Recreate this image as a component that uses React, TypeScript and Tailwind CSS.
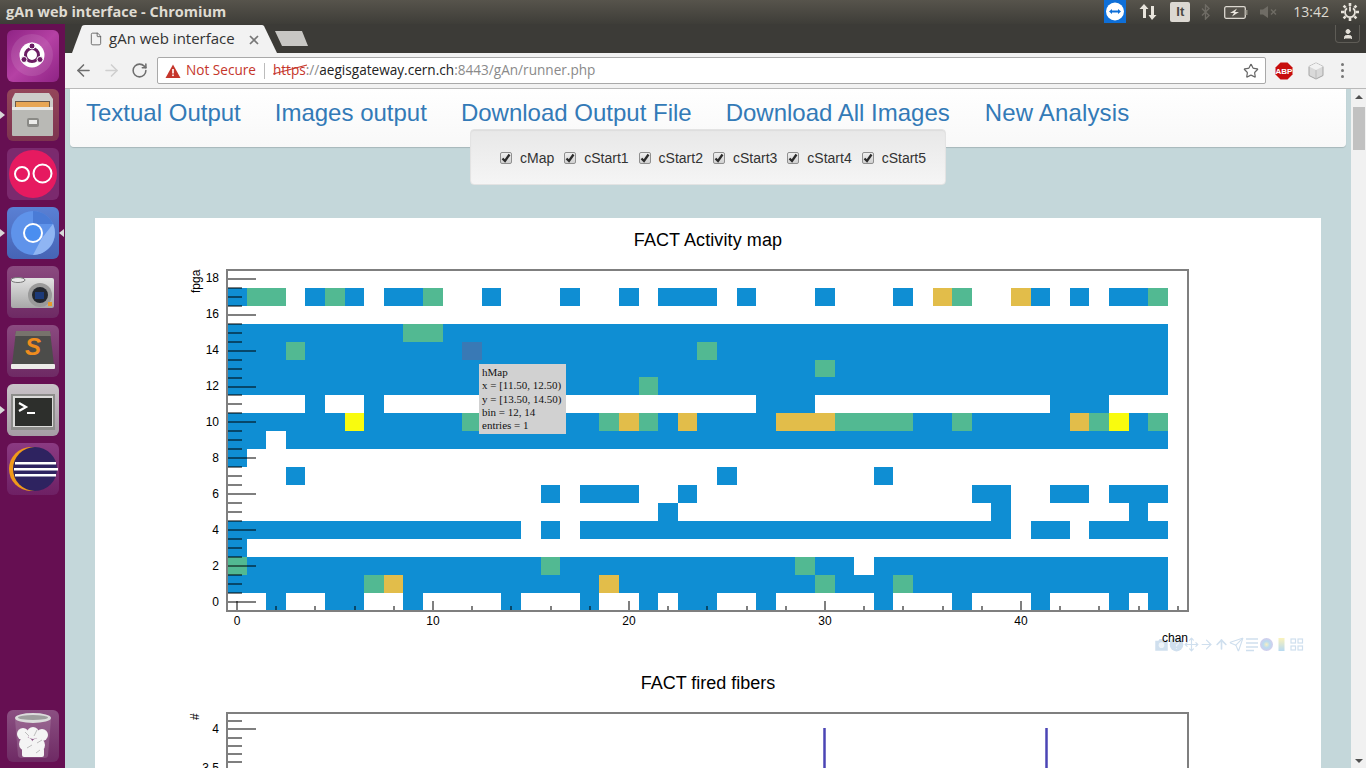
import { ArrowLeft, ArrowRight, ArrowUp, File, Move, RotateCw, Send, Star, User } from "lucide-react";

const UI_FONT = "font-['Open_Sans','Noto_Sans',sans-serif]";

const BLUE = "#0f8ed3";
const GREEN = "#52b992";
const ORANGE = "#e2bd4a";
const YELLOW = "#f9fb0e";
const HOVER = "#3979b5";

const colX = (col: number) => Math.round(227.05 + 19.6 * col);
const rowY = (row: number) => Math.round(593 - 17.96 * row);

type Run = [number, number, string?];

// [first col, last col, colour] per fpga row, later runs paint over earlier ones
const heatRows: Record<number, Run[]> = {
  17: [
    [0, 0], [1, 2, GREEN], [4, 4], [5, 5, GREEN], [6, 6], [8, 9], [10, 10, GREEN], [13, 13], [17, 17], [20, 20],
    [22, 24], [26, 26], [30, 30], [34, 34], [36, 36, ORANGE], [37, 37, GREEN], [40, 40, ORANGE], [41, 41], [43, 43],
    [45, 46], [47, 47, GREEN],
  ],
  15: [[0, 47], [9, 10, GREEN]],
  14: [[0, 47], [3, 3, GREEN], [12, 12, HOVER], [24, 24, GREEN]],
  13: [[0, 47], [30, 30, GREEN]],
  12: [[0, 47], [21, 21, GREEN]],
  11: [[4, 4], [7, 7], [27, 29], [42, 44]],
  10: [
    [0, 47], [6, 6, YELLOW], [12, 12, GREEN], [19, 19, GREEN], [20, 20, ORANGE], [21, 21, GREEN], [23, 23, ORANGE],
    [28, 30, ORANGE], [31, 34, GREEN], [37, 37, GREEN], [43, 43, ORANGE], [44, 44, GREEN], [45, 45, YELLOW],
    [47, 47, GREEN],
  ],
  9: [[0, 1], [3, 47]],
  8: [[0, 0]],
  7: [[3, 3], [25, 25], [33, 33]],
  6: [[16, 16], [18, 20], [23, 23], [38, 39], [42, 43], [45, 47]],
  5: [[22, 22], [39, 39], [46, 46]],
  4: [[0, 14], [16, 16], [18, 39], [41, 42], [44, 47]],
  3: [[0, 0]],
  2: [[0, 31], [33, 47], [0, 0, GREEN], [16, 16, GREEN], [29, 29, GREEN]],
  1: [[0, 47], [7, 7, GREEN], [8, 8, ORANGE], [19, 19, ORANGE], [30, 30, GREEN], [34, 34, GREEN]],
  0: [[2, 2], [5, 6], [9, 9], [14, 14], [18, 18], [21, 21], [23, 24], [27, 27], [33, 33], [37, 37], [41, 41], [45, 45], [47, 47]],
};

const range = (count: number) => Array.from({ length: count }, (_, index) => index);

const ActivityMap = () => (
  <svg viewBox="95 260 1226 400" width={1226} height={400} className="relative block">
    <g shapeRendering="crispEdges">
      {Object.entries(heatRows).map(([row, runs]) =>
        runs.map(([from, to, color], index) => (
          <rect
            key={`${row}-${index}`}
            x={colX(from)}
            y={rowY(Number(row))}
            width={colX(to + 1) - colX(from)}
            height={rowY(Number(row) - 1) - rowY(Number(row))}
            fill={color ?? BLUE}
          />
        )),
      )}
      {range(39).map((tick) => {
        const y = Math.round(611 - 8.98 * tick);
        const major = (tick - 1) % 4 === 0;
        return <rect key={tick} x={227} width={major ? 29 : 15} y={y - 1} height={2} fill="#000" fillOpacity={0.5} />;
      })}
      {range(25).map((tick) => {
        const x = Math.round(237 + 39.2 * tick);
        const top = tick % 5 === 0 ? 601 : 606;
        return <rect key={tick} x={x - 1} width={2} y={top} height={610 - top} fill="#000" fillOpacity={0.5} />;
      })}
      <rect x={227} y={270} width={961} height={341} fill="none" stroke="#7f7f7f" strokeWidth={2} />
    </g>
    <g fontFamily="'Liberation Sans', sans-serif" fontSize={12} fill="#000">
      {range(10).map((index) => (
        <text key={index} x={219} y={605.5 - 36 * index} textAnchor="end">
          {index * 2}
        </text>
      ))}
      {range(5).map((index) => (
        <text key={index} x={237 + 196 * index} y={625} textAnchor="middle">
          {index * 10}
        </text>
      ))}
      <text x={1188} y={642} textAnchor="end">chan</text>
      <text transform="translate(200 293) rotate(-90)">fpga</text>
    </g>
  </svg>
);

const FiberPlot = () => (
  <svg viewBox="95 700 1226 68" width={1226} height={68} className="block">
    <g shapeRendering="crispEdges">
      {range(8).map((tick) => {
        const y = Math.round(713 + 8.2 * tick);
        return <rect key={tick} x={227} width={tick === 2 ? 29 : 15} y={y - 1} height={2} fill="#000" fillOpacity={0.5} />;
      })}
      <rect x={227} y={713} width={961} height={100} fill="none" stroke="#7f7f7f" strokeWidth={2} />
    </g>
    <line x1={824.5} x2={824.5} y1={728} y2={768} stroke="#4b45b5" strokeWidth={2.5} />
    <line x1={1046.5} x2={1046.5} y1={728} y2={768} stroke="#4b45b5" strokeWidth={2.5} />
    <g fontFamily="'Liberation Sans', sans-serif" fontSize={12} fill="#000">
      <text x={219} y={733} textAnchor="end">4</text>
      <text x={219} y={772} textAnchor="end">3.5</text>
      <text transform="translate(199 720) rotate(-90)">#</text>
    </g>
  </svg>
);

const ModeBar = () => (
  <div className="absolute left-[1059px] top-[385px] flex items-center text-[#cfdfee]">
    <svg width="15" height="15" viewBox="0 0 24 24" fill="#cfdfee">
      <path d="M2 6h5l2-3h6l2 3h5v16H2z" />
      <circle cx="12" cy="13" r="4.5" fill="#eef4f9" />
    </svg>
    <svg width="15" height="15" viewBox="0 0 24 24">
      <circle cx="12" cy="12" r="11" fill="#cfdfee" />
      <path d="M9 9a3 3 0 1 1 4 3l-1 2v1M12 18v1" stroke="#eef4f9" strokeWidth="2" fill="none" />
    </svg>
    <Move size={15} strokeWidth={1.8} />
    <ArrowRight size={15} strokeWidth={1.8} />
    <ArrowUp size={15} strokeWidth={2.6} />
    <Send size={15} strokeWidth={1.8} />
    <svg width="15" height="15" viewBox="0 0 15 15" stroke="#cfdfee" strokeWidth="1.4">
      <path d="M2 2h12M2 6h12M2 10h12M2 13.500h8" />
    </svg>
    <svg width="15" height="15" viewBox="0 0 15 15">
      <defs>
        <radialGradient id="modeGlow">
          <stop offset="0" stopColor="#f7efc4" />
          <stop offset="0.5" stopColor="#bcdcf0" />
          <stop offset="1" stopColor="#d2cdec" />
        </radialGradient>
      </defs>
      <circle cx="7.5" cy="7.5" r="6.5" fill="url(#modeGlow)" />
    </svg>
    <svg width="15" height="15" viewBox="0 0 15 15">
      <defs>
        <linearGradient id="modeBar" x1="0" y1="0" x2="0" y2="1">
          <stop offset="0" stopColor="#fbf3bb" />
          <stop offset="1" stopColor="#b7daf2" />
        </linearGradient>
      </defs>
      <rect x="4.5" y="1" width="6" height="13" fill="url(#modeBar)" />
    </svg>
    <svg width="15" height="15" viewBox="0 0 15 15" fill="none" stroke="#cfdfee" strokeWidth="1.2">
      <rect x="2" y="2" width="4.5" height="4" />
      <rect x="9" y="2" width="4.5" height="4" />
      <rect x="2" y="9" width="4.5" height="4" />
      <rect x="9" y="9" width="4.5" height="4" />
    </svg>
  </div>
);

const Check = ({ label }: { label: string }) => (
  <label className="flex items-center gap-[8px] text-[14px] leading-[20px] text-[#333]">
    <span className="flex h-[12px] w-[12px] items-center justify-center rounded-[2px] border border-[#8f8f8f] bg-gradient-to-b from-[#f0f0f0] to-[#d0d0d0]">
      <svg width="10" height="10" viewBox="0 0 10 10">
        <path d="M1.500 5.500 4 8l4.500-6.500" fill="none" stroke="#2b2b2b" strokeWidth="2.300" />
      </svg>
    </span>
    {label}
  </label>
);

const Tile = ({ className, children }: { className: string; children: React.ReactNode }) => (
  <div className={`relative h-[52px] w-[52px] overflow-hidden rounded-[6px] ${className}`}>{children}</div>
);

const Launcher = () => (
  <aside className="flex w-[65px] flex-col items-center bg-[#660f52] pb-[6px] pt-[6px]">
    <div className="flex flex-col gap-[7px]">
      <Tile className="bg-gradient-to-br from-[#8f2385] via-[#b541a4] to-[#8f2385]">
        <svg viewBox="0 0 52 52" className="h-full w-full">
          <circle cx="25" cy="25" r="21" fill="#fff" opacity="0.1" />
          <circle cx="25" cy="25" r="12.5" fill="#fff" />
          <circle cx="25" cy="25" r="6.5" fill="none" stroke="#6b1d63" strokeWidth="3" />
          <circle cx="25" cy="16" r="3" fill="#6b1d63" stroke="#fff" />
          <circle cx="17" cy="29.5" r="3" fill="#6b1d63" stroke="#fff" />
          <circle cx="33" cy="29.5" r="3" fill="#6b1d63" stroke="#fff" />
        </svg>
      </Tile>
      <Tile className="bg-gradient-to-b from-[#94465a] to-[#7d3450]">
        <svg viewBox="0 0 52 52" className="h-full w-full">
          <path d="M8 4h34l4 6v8H5v-8z" fill="#cdcdca" />
          <rect x="8" y="12" width="35" height="8" fill="#6b5a4a" />
          <rect x="9" y="13" width="33" height="5" fill="#e8a654" />
          <path d="M5 20h41v26q0 1-1 1H6q-1 0-1-1z" fill="#b9b9b5" />
          <rect x="5" y="18" width="41" height="3" fill="#e8e8e6" />
          <rect x="20" y="29" width="12" height="9" rx="2" fill="#8a8a86" />
          <rect x="22" y="31" width="8" height="4" fill="#ececea" />
        </svg>
      </Tile>
      <Tile className="bg-[#7b2a6e]">
        <svg viewBox="0 0 52 52" className="h-full w-full">
          <circle cx="26" cy="26" r="24" fill="#e61a60" />
          <circle cx="15" cy="26" r="7" fill="none" stroke="#fff" strokeWidth="2" />
          <circle cx="35.5" cy="25.5" r="9" fill="none" stroke="#fff" strokeWidth="2" />
        </svg>
      </Tile>
      <Tile className="bg-gradient-to-b from-[#5a80d4] to-[#4664b5]">
        <svg viewBox="0 0 52 52" className="h-full w-full">
          <circle cx="26" cy="26" r="22" fill="#5f93ea" />
          <path d="M26 4a22 22 0 0 1 20 13H26z" fill="#4a7bd6" />
          <path d="M46 17a22 22 0 0 1-20 31l9-17z" fill="#8fb5f3" />
          <circle cx="26" cy="26" r="10" fill="#fff" />
          <circle cx="26" cy="26" r="8" fill="#4a8ef0" />
        </svg>
      </Tile>
      <Tile className="bg-gradient-to-b from-[#8b4a80] to-[#6e2a64]">
        <svg viewBox="0 0 52 52" className="h-full w-full">
          <defs>
            <linearGradient id="cameraBody" x1="0" y1="0" x2="0" y2="1">
              <stop offset="0" stopColor="#e2e2e2" />
              <stop offset="1" stopColor="#a8a8a8" />
            </linearGradient>
          </defs>
          <rect x="4" y="12" width="43" height="30" rx="2" fill="url(#cameraBody)" />
          <ellipse cx="11" cy="14" rx="7" ry="2.500" fill="#e8e8e8" stroke="#777" />
          <circle cx="33" cy="29" r="12" fill="#9a9a9a" />
          <circle cx="33" cy="29" r="8" fill="#23272e" />
          <rect x="28" y="26" width="9" height="7" fill="#1c3a78" />
          <rect x="41" y="36" width="4" height="4" fill="#e89b2c" />
        </svg>
      </Tile>
      <Tile className="bg-gradient-to-b from-[#8b4a80] to-[#6e2a64]">
        <svg viewBox="0 0 52 52" className="h-full w-full">
          <path d="M9 6h34l4 34H5z" fill="#4c4c4a" />
          <path d="M9 6h34l1 5H8z" fill="#77736c" />
          <rect x="4" y="39" width="44" height="5" rx="1" fill="#ecebe8" />
          <text x="26" y="30" textAnchor="middle" fontFamily="'Liberation Sans', sans-serif" fontWeight="700" fontStyle="italic" fontSize="24" fill="#f08c1e">
            S
          </text>
        </svg>
      </Tile>
      <Tile className="bg-gradient-to-b from-[#c9c3c8] to-[#a69ca5]">
        <svg viewBox="0 0 52 52" className="h-full w-full">
          <rect x="4" y="10" width="44" height="36" fill="#8d8d8b" />
          <rect x="6" y="12" width="40" height="31" fill="#dcdcda" />
          <rect x="8" y="14" width="37" height="28" fill="#2d2f2c" />
          <path d="M12 19l7 4-7 4" fill="none" stroke="#fff" strokeWidth="2.200" />
          <rect x="20" y="28" width="8" height="2" fill="#fff" />
        </svg>
      </Tile>
      <Tile className="bg-gradient-to-b from-[#8b3a82] to-[#6e2064]">
        <svg viewBox="0 0 52 52" className="h-full w-full">
          <circle cx="24" cy="26" r="22" fill="#f09a1a" />
          <circle cx="28" cy="26" r="22" fill="#2e2360" />
          <rect x="8" y="19" width="41" height="2.500" fill="#fff" />
          <rect x="7" y="25" width="44" height="2.500" fill="#fff" />
          <rect x="8" y="31" width="41" height="2.500" fill="#fff" />
        </svg>
      </Tile>
    </div>
    <div className="flex-1" />
    <Tile className="bg-gradient-to-b from-[#8b4f82] to-[#6e2a64]">
      <svg viewBox="0 0 52 52" className="h-full w-full">
        <path d="M8 9l3 37q1 2 3 2h24q2 0 3-2l3-37z" fill="#fff" fillOpacity="0.14" />
        <ellipse cx="26" cy="8" rx="18" ry="5" fill="#dcdcdc" />
        <ellipse cx="26" cy="7.500" rx="15" ry="2.500" fill="#9e9e9e" />
        <g fill="#f4f4f4">
          <circle cx="16" cy="24" r="6" />
          <circle cx="26" cy="23" r="6" />
          <circle cx="35" cy="25" r="6" />
          <circle cx="19" cy="34" r="7" />
          <circle cx="31" cy="35" r="7" />
          <rect x="15" y="38" width="22" height="9" rx="2" />
        </g>
        <path d="M18 22l4 4M30 20l-3 6M35 30l-5 3M20 38l5-3M29 43l4-3" stroke="#bdbdbd" fill="none" />
      </svg>
    </Tile>
    {/* running indicators, they sit over the dock edge */}
    <span className="absolute left-0 top-[111px] h-0 w-0 border-y-[4px] border-l-[5px] border-y-transparent border-l-[#d8d8d8]" />
    <span className="absolute left-0 top-[229px] h-0 w-0 border-y-[4px] border-l-[5px] border-y-transparent border-l-[#d8d8d8]" />
    <span className="absolute left-[59px] top-[229px] h-0 w-0 border-y-[4px] border-r-[5px] border-y-transparent border-r-[#d8d8d8]" />
    <span className="absolute left-0 top-[406px] h-0 w-0 border-y-[4px] border-l-[5px] border-y-transparent border-l-[#d8d8d8]" />
  </aside>
);

const TopPanel = () => (
  <header className={`flex h-[24px] items-center bg-gradient-to-b from-[#57544c] to-[#3e3d38] ${UI_FONT}`}>
    <span className="ml-[6px] text-[14.5px] font-bold text-[#dfdbd2]">gAn web interface - Chromium</span>
    <div className="flex-1" />
    <svg width="22" height="23" viewBox="0 0 22 23" className="mr-[12px] self-start">
      <rect width="22" height="23" fill="#0e6fd8" />
      <circle cx="11" cy="11.500" r="9" fill="#fff" />
      <path d="M5 11.500l3-2.600v1.600h6V8.900l3 2.600-3 2.600v-1.600H8v1.600z" fill="#0e6fd8" />
    </svg>
    <svg width="20" height="18" viewBox="0 0 20 18" fill="#e8e4dc" className="mr-[12px]">
      <path d="M6 1l4.500 5H8v9H5V6H1.500zM14 17l4.500-5H16V3h-3v9h-2.500z" />
    </svg>
    <span className="mr-[11px] flex h-[20px] w-[20px] items-center justify-center rounded-[2px] bg-[#dcd8d2] font-['Liberation_Sans',sans-serif] text-[13px] font-bold text-[#4a4843]">
      It
    </span>
    <svg width="10" height="16" viewBox="0 0 10 16" fill="none" stroke="#6f6c65" strokeWidth="1.400" className="mr-[13px]">
      <path d="M1 4.500l7 7-3.500 3.500V1L8 4.500l-7 7" />
    </svg>
    <svg width="24" height="13" viewBox="0 0 24 13" className="mr-[12px]">
      <rect x="0.7" y="0.7" width="20.600" height="11.600" rx="1.500" fill="#55524b" stroke="#dcd8d0" strokeWidth="1.300" />
      <rect x="21.500" y="4" width="2" height="5" fill="#8c897f" />
      <path d="M13 2.500 6 7h4l-2 3.500L15 6h-4z" fill="#e8e4dc" />
    </svg>
    <svg width="18" height="12" viewBox="0 0 18 12" className="mr-[15px]" fill="#6f6c65">
      <path d="M0 3.500h3L8 0v12L3 8.500H0z" />
      <path d="M11 3.500l5 5m0-5-5 5" stroke="#6f6c65" strokeWidth="1.400" />
    </svg>
    <span className="mr-[12px] text-[14px] leading-none text-[#dfdbd2]">13:42</span>
    <svg width="18" height="18" viewBox="0 0 18 18" fill="none" stroke="#e8e4dc" className="mr-[7px]">
      <path d="M9 0v3M9 15v3M0 9h3M15 9h3M2.600 2.600l2 2M13.400 13.400l2 2M2.600 15.400l2-2M13.400 4.600l2-2" strokeWidth="2.600" />
      <path d="M6 5.200a5 5 0 1 0 6 0" strokeWidth="1.800" />
      <path d="M9 3.500v5" strokeWidth="1.800" />
    </svg>
  </header>
);

const TabStrip = () => (
  <div className={`flex h-[29px] items-end bg-[#3c3b37] ${UI_FONT}`}>
    <div className="relative ml-[7px] flex h-[28px] w-[205px] items-center pl-[17px]">
      <svg viewBox="0 0 205 28" className="absolute inset-0 h-full w-full">
        <path d="M0 28 10 1Q11 0 13 0H190Q191 0 192 1L205 28z" fill="#f2f2f2" />
      </svg>
      <File size={14} strokeWidth={1.4} className="relative text-[#555]" />
      <span className="relative ml-[6px] whitespace-nowrap pb-[2px] text-[15px] leading-none text-[#333]">gAn web interface</span>
      <svg width="10" height="10" viewBox="0 0 10 10" className="absolute left-[177px] top-[10px]" stroke="#777" strokeWidth="1.700">
        <path d="M1 1l8 8M9 1l-8 8" />
      </svg>
    </div>
    <svg width="34" height="16" viewBox="0 0 34 16" className="-ml-[2px] mb-[6px]">
      <path d="M0 0h27l6 15H7z" fill="#c8c7c4" />
    </svg>
    <div className="flex-1" />
    <span className="mb-[10px] mr-[6px] flex h-[18px] w-[25px] items-center justify-center self-end rounded-b-[4px] border border-t-0 border-[#5e5c56] text-[#e4e0d8]">
      <User size={12} fill="#e4e0d8" />
    </span>
  </div>
);

const Toolbar = () => (
  <div className={`flex h-[36px] items-center border-b border-[#b9b9b9] bg-[#f2f2f2] ${UI_FONT}`}>
    <ArrowLeft size={19} strokeWidth={2} className="ml-[9px] text-[#6e6e6e]" />
    <ArrowRight size={19} strokeWidth={2} className="ml-[9px] text-[#cfcfcf]" />
    <RotateCw size={17} strokeWidth={2.2} className="ml-[10px] text-[#6e6e6e]" />
    <div className="ml-[9px] flex h-[27px] w-[1109px] items-center rounded-[2px] border border-[#a9a9a9] bg-white pl-[7px] pr-[6px]">
      <svg width="16" height="14" viewBox="0 0 16 14">
        <path d="M8 0.500 15.500 14H.5z" fill="#c5352b" />
        <rect x="7.200" y="5" width="1.600" height="4.500" fill="#fff" />
        <rect x="7.200" y="10.500" width="1.600" height="1.600" fill="#fff" />
      </svg>
      <span className="ml-[5px] text-[13.6px] text-[#c5352b]">Not Secure</span>
      <span className="ml-[8px] h-[16px] w-px bg-[#bcbcbc]" />
      <span className="relative ml-[8px] whitespace-nowrap text-[13.6px]">
        <span className="text-[#c5352b]">https</span>
        <span className="text-[#8a8a8a]">://</span>
        <span className="text-[#222]">aegisgateway.cern.ch</span>
        <span className="text-[#8a8a8a]">:8443/gAn/runner.php</span>
        <svg width="36" height="11" viewBox="0 0 36 11" className="absolute left-0 top-[4px]" stroke="#c5352b" strokeWidth="1.200">
          <path d="M0 10 34 1" />
        </svg>
      </span>
      <div className="flex-1" />
      <Star size={16} strokeWidth={1.8} className="text-[#666]" />
    </div>
    <svg width="18" height="18" viewBox="0 0 18 18" className="ml-[9px]">
      <polygon points="5.500,0.500 12.500,0.500 17.500,5.500 17.500,12.500 12.500,17.500 5.500,17.500 0.500,12.500 0.500,5.500" fill="#c70d0c" />
      <text x="9" y="12" textAnchor="middle" fontFamily="'Liberation Sans', sans-serif" fontWeight="700" fontSize="8" fill="#fff">ABP</text>
    </svg>
    <svg width="18" height="18" viewBox="0 0 18 18" className="ml-[14px]">
      <path d="M9 1l7 3.500v9L9 17l-7-3.500v-9z" fill="#d9d9d9" stroke="#a5a5a5" />
      <path d="M2 4.500 9 8l7-3.500L9 1z" fill="#f2f2f2" />
      <path d="M9 8v9" stroke="#bbb" />
    </svg>
    <span className="ml-[16px] flex flex-col gap-[3px]">
      <span className="h-[3px] w-[3px] rounded-full bg-[#777]" />
      <span className="h-[3px] w-[3px] rounded-full bg-[#777]" />
      <span className="h-[3px] w-[3px] rounded-full bg-[#777]" />
    </span>
  </div>
);

const Scrollbar = () => (
  <div className="flex w-[15px] flex-col items-center bg-[#f1f1f1]">
    <span className="mt-[6px] h-0 w-0 border-x-[4px] border-b-[4px] border-x-transparent border-b-[#505050]" />
    <span className="mt-[8px] h-[43px] w-[12px] bg-[#c1c1c1]" />
    <div className="flex-1" />
    <span className="mb-[5px] h-0 w-0 border-x-[4px] border-t-[4px] border-x-transparent border-t-[#505050]" />
  </div>
);

const navLinks = ["Textual Output", "Images output", "Download Output File", "Download All Images"];
const canvases = ["cMap", "cStart1", "cStart2", "cStart3", "cStart4", "cStart5"];

const App = () => (
  <div className="relative flex h-[768px] w-[1366px] flex-col overflow-hidden">
    <TopPanel />
    <div className="flex min-h-0 flex-1">
      <Launcher />
      <div className="flex min-w-0 flex-1 flex-col">
        <TabStrip />
        <Toolbar />
        <div className="flex min-h-0 flex-1">
          <main className="min-w-0 flex-1 overflow-hidden bg-[#c4d7da] font-['Liberation_Sans',sans-serif]">
            <nav className="ml-[5px] mr-[5px] flex h-[58px] items-start gap-[34px] rounded-b-[4px] bg-gradient-to-b from-white to-[#f8f8f8] pl-[16px] pt-[8px] shadow-[0_1px_1px_rgba(0,0,0,0.15)]">
              {navLinks.map((link) => (
                <a key={link} className="text-[24px] leading-[32px] text-[#337ab7]">
                  {link}
                </a>
              ))}
              <a className="ml-[1px] text-[24px] leading-[32px] tracking-[0.15px] text-[#337ab7]">New Analysis</a>
            </nav>
            <div className="relative z-10 ml-[405px] -mt-[18px] flex h-[56px] w-[476px] items-center gap-[10px] rounded-[4px] border border-[#e3e3e3] bg-gradient-to-b from-[#e8e8e8] to-[#f5f5f5] pl-[29px] pt-[1px] shadow-[inset_0_1px_1px_rgba(0,0,0,0.05)]">
              {canvases.map((name) => (
                <Check key={name} label={name} />
              ))}
            </div>
            <section className="relative ml-[30px] mt-[33px] w-[1226px] bg-white text-black">
              <h3 className="pt-[10px] text-center text-[18px] leading-[24px] tracking-[0.1px]">FACT Activity map</h3>
              <div className="relative h-[419px] pt-[8px]">
                <ModeBar />
                <ActivityMap />
                <div className="absolute left-[384px] top-[112px] h-[70px] w-[87px] bg-[#d1d1d1] px-[3px] py-[2px] font-['Liberation_Serif',serif] text-[11px] leading-[13.300px] text-[#111]">
                  <div>hMap</div>
                  <div className="whitespace-nowrap">x = [11.50, 12.50)</div>
                  <div className="whitespace-nowrap">y = [13.50, 14.50)</div>
                  <div>bin = 12, 14</div>
                  <div>entries = 1</div>
                </div>
              </div>
              <h3 className="text-center text-[18px] leading-[24px]">FACT fired fibers</h3>
              <div className="pt-[5px]">
                <FiberPlot />
              </div>
            </section>
          </main>
          <Scrollbar />
        </div>
      </div>
    </div>
  </div>
);

export default App;
